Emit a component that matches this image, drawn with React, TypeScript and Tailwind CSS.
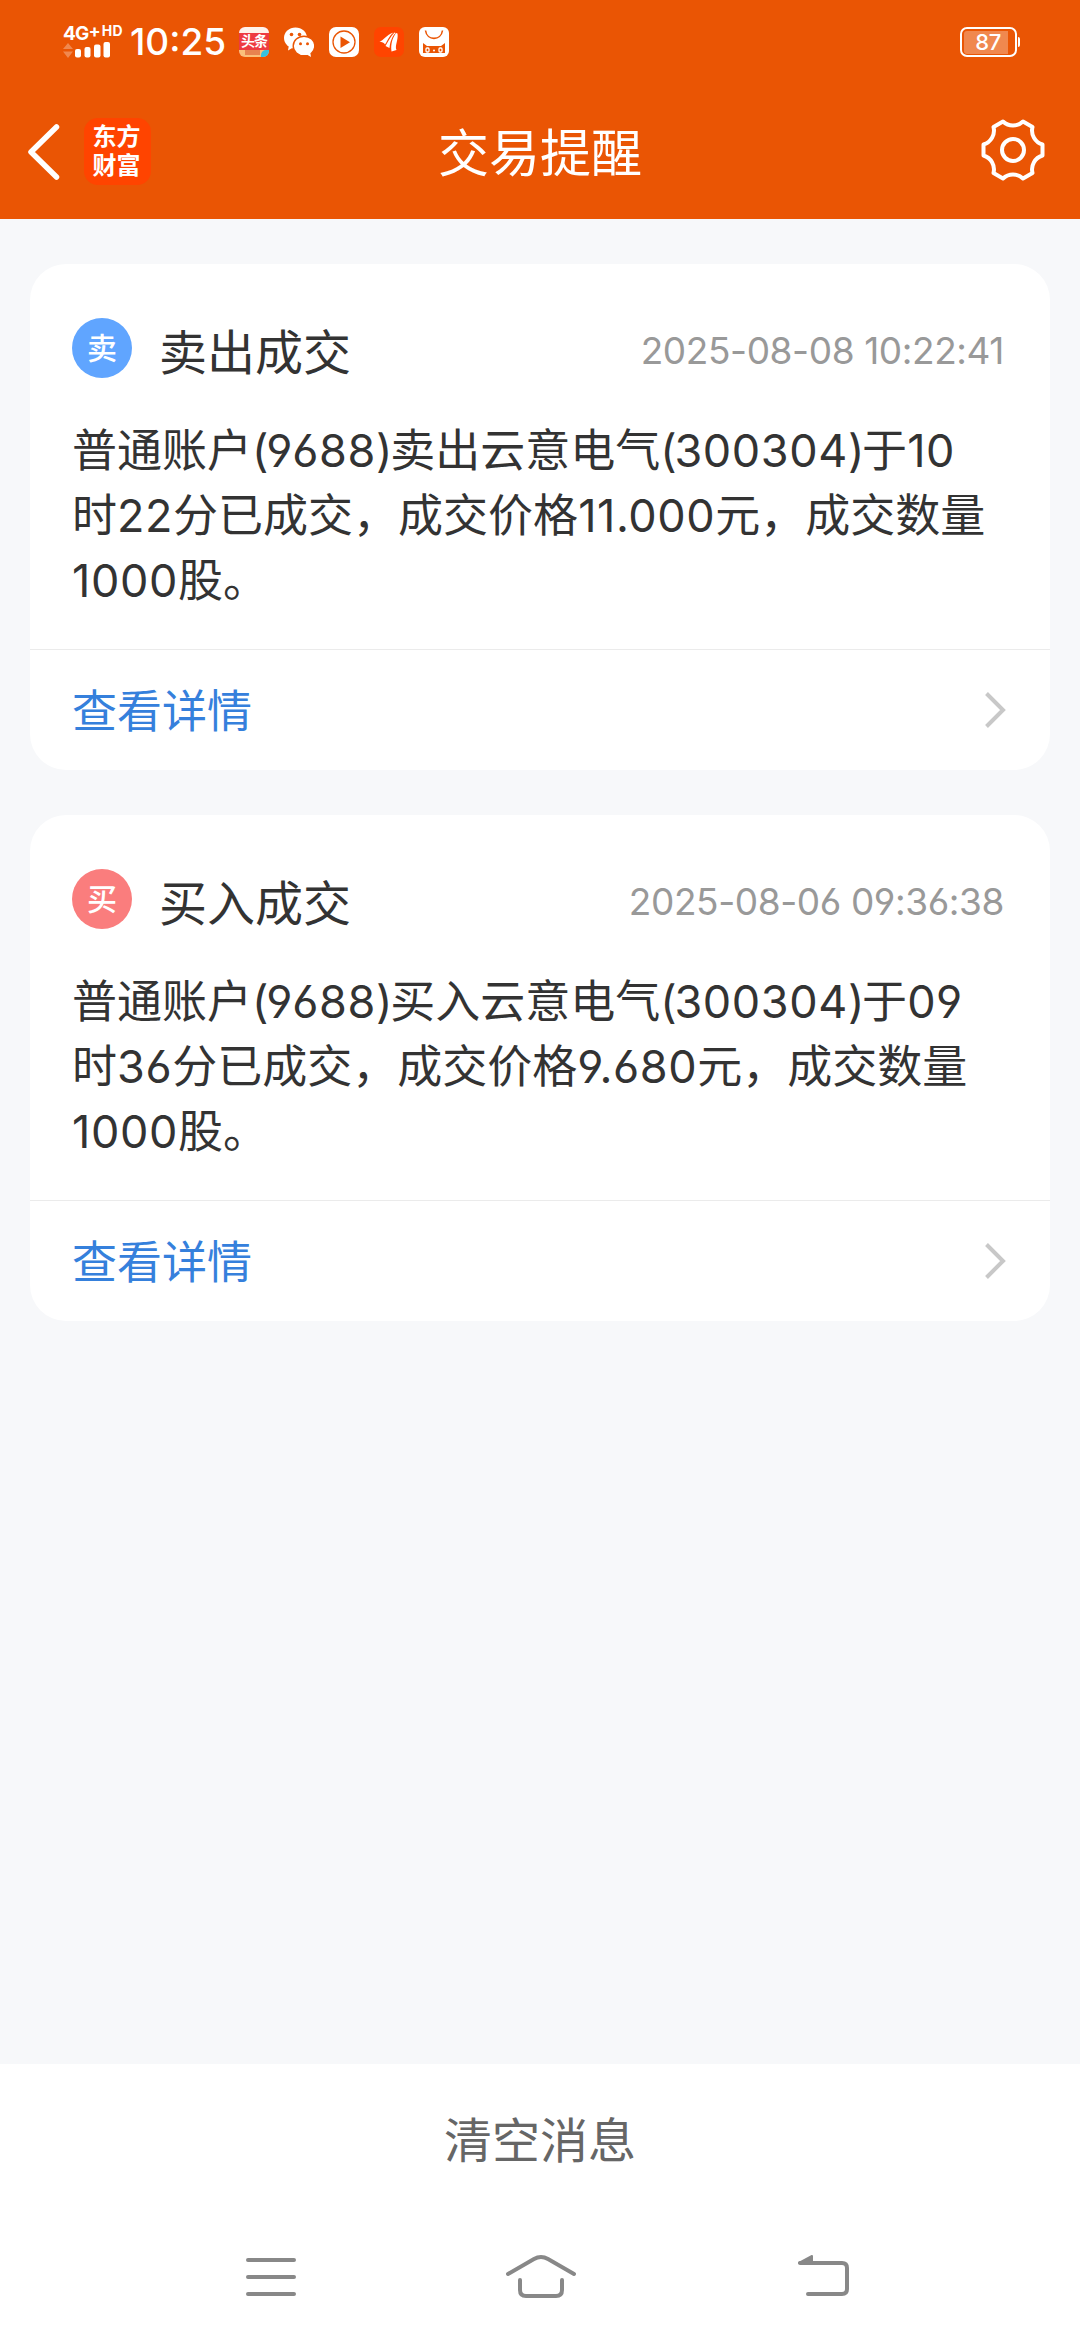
interface TradeMessage {
  id: number;
  badge: string;
  badgeClass: string;
  title: string;
  time: string;
  lines: string[];
}

const messages: TradeMessage[] = [
  {
    id: 1,
    badge: '卖',
    badgeClass: 'bg-[#60a5ff]',
    title: '卖出成交',
    time: '2025-08-08 10:22:41',
    lines: [
      '普通账户(9688)卖出云意电气(300304)于10',
      '时22分已成交，成交价格11.000元，成交数量',
      '1000股。'
    ]
  },
  {
    id: 2,
    badge: '买',
    badgeClass: 'bg-[#fa7d7d]',
    title: '买入成交',
    time: '2025-08-06 09:36:38',
    lines: [
      '普通账户(9688)买入云意电气(300304)于09',
      '时36分已成交，成交价格9.680元，成交数量',
      '1000股。'
    ]
  }
];

function SignalIcon() {
  return (
    <div className="flex h-[35px] w-[60px] flex-col">
      <div className="flex h-[17px] gap-[3px] leading-[17px] font-bold text-white">
        <span className="text-[19px] tracking-[-0.8px]">4G</span>
        <span className="-ml-[3px] text-[18px] leading-[11px]">+</span>
        <span className="-ml-[2px] text-[14px] leading-[12px] tracking-[0.2px]">HD</span>
      </div>
      <svg width="50" height="18" viewBox="0 0 50 18" fill="#fff">
        <path d="M5 1L10 7H0ZM0 9.5H10L5 16Z" opacity="0.3" />
        <rect x="12" y="7" width="6" height="8.5" rx="2" />
        <rect x="21.5" y="5" width="6" height="10.5" rx="2" />
        <rect x="31" y="2.5" width="6.5" height="13" rx="2" />
        <rect x="40.5" y="0" width="6.5" height="15.5" rx="2" />
      </svg>
    </div>
  );
}

function StatusBar() {
  return (
    <div className="flex h-[84px] items-center pr-[60px] pl-[63px]">
      <SignalIcon />
      <span className="ml-[7px] w-[109px] text-[37px] leading-[40px] font-medium text-white">10:25</span>
      <div className="flex gap-[15px]">
        <div className="flex h-[30px] w-[30px] flex-col overflow-hidden rounded-[6px] bg-[#ee3b41]">
          <div className="h-[6px] bg-[#fff3ea]" />
          <div className="h-[17px] text-center text-[14px] leading-[16px] font-bold tracking-[-1px] text-white">头条</div>
          <div className="flex h-[7px] bg-[#fbc07a]">
            <div className="ml-[6px] h-[5px] w-[15px] bg-[#e8834f]" />
            <div className="ml-auto h-[7px] w-[8px] rounded-tl-[5px] bg-[#35c3e0]" />
          </div>
        </div>
        <svg width="30" height="30" viewBox="0 0 30 30" fill="#fff">
          <ellipse cx="11.5" cy="11" rx="11.5" ry="10.5" />
          <path d="M5 18L4 23.5L10 20Z" />
          <ellipse cx="20" cy="19" rx="10.8" ry="9.8" stroke="#ea5504" strokeWidth="1.4" />
          <path d="M22 27L27 30L26 24Z" />
          <g fill="#ea5504">
            <circle cx="7.5" cy="7.5" r="1.8" />
            <circle cx="15.5" cy="7.5" r="1.8" />
            <circle cx="16.5" cy="16.8" r="1.5" />
            <circle cx="23.5" cy="16.8" r="1.5" />
          </g>
        </svg>
        <svg width="30" height="30" viewBox="0 0 30 30">
          <rect width="30" height="30" rx="7" fill="#fff" />
          <circle cx="15" cy="15" r="11" fill="none" stroke="#ea5504" strokeWidth="1.3" />
          <path d="M11.5 9.5L21 15.2L11.5 21Z" fill="#ea5504" />
        </svg>
        <svg width="30" height="30" viewBox="0 0 30 30">
          <rect width="30" height="30" rx="7" fill="#ff4400" />
          <path
            d="M5.5 14.5C10 13.5 12 8 19.5 5.5C14.5 9.5 13.5 14 11 17.5C10 15.5 8 15 5.5 14.5ZM20.5 5.5C16 10 14 15 11.5 19L15.5 21C16 16 17.5 10 21.5 6ZM22 6C18.5 11 16.5 17 17.5 24.5L22.5 23C20.5 19 24.5 13 23.5 6.5Z"
            fill="#fff"
          />
        </svg>
        <svg width="30" height="30" viewBox="0 0 30 30" fill="none">
          <rect width="30" height="30" rx="6" fill="#fff" />
          <path d="M6.5 3.5C8 14 22 14 23.5 3.5" stroke="#ea5504" strokeWidth="1.6" />
          <path d="M4 16L8 19H22L26 16V26H4Z" fill="#ea5504" />
          <rect x="7" y="21" width="3" height="4" rx="1" stroke="#fff" strokeWidth="1.3" />
          <rect x="20" y="21" width="3" height="4" rx="1" stroke="#fff" strokeWidth="1.3" />
          <circle cx="15" cy="23.5" r="1" fill="#fff" />
        </svg>
      </div>
      <div className="ml-auto flex items-center gap-[1px]">
        <div className="flex h-[30px] w-[57px] rounded-[7px] border-[2.5px] border-white p-[1.5px]">
          <div className="h-full w-[44px] rounded-l-[3px] bg-white/30 pl-[5px] text-center text-[22px] leading-[22px] font-medium tracking-[-0.5px] text-white">
            87
          </div>
        </div>
        <div className="h-[10px] w-[2px] rounded-r bg-white" />
      </div>
    </div>
  );
}

function Header() {
  return (
    <div className="flex h-[135px] items-center justify-between">
      <div className="flex w-[430px] items-center pl-[26px]">
        <svg width="34" height="56" viewBox="0 0 34 56" fill="none">
          <path d="M30.5 3L5 28L30.5 53" stroke="#fff" strokeWidth="5.5" strokeLinecap="round" strokeLinejoin="round" />
        </svg>
        <div className="ml-[24px] flex h-[67px] w-[67px] flex-col items-center justify-center rounded-[14px] bg-[#ff4400] pr-[2px] pb-[2px] text-[24px] leading-[29px] font-bold text-white">
          <span>东方</span>
          <span>财富</span>
        </div>
      </div>
      <h1 className="pt-[5px] text-[51px] leading-[60px] font-normal text-white">交易提醒</h1>
      <div className="flex w-[430px] justify-end pr-[33px] pb-[3px]">
        <svg width="68" height="68" viewBox="-34 -34 68 68" fill="none" stroke="#fff" strokeWidth="4" strokeLinejoin="round">
          <path d="M-10 -28.5A14.5 14.5 0 0 0 10 -28.5L19.5 -23A14.5 14.5 0 0 0 29.5 -5.5V5.5A14.5 14.5 0 0 0 19.5 23L10 28.5A14.5 14.5 0 0 0 -10 28.5L-19.5 23A14.5 14.5 0 0 0 -29.5 5.5V-5.5A14.5 14.5 0 0 0 -19.5 -23Z" />
          <circle r="11" />
        </svg>
      </div>
    </div>
  );
}

// digits are spaced a little wider and parentheses a little tighter than the Chinese text
function MessageLine({ text }: { text: string }) {
  return (
    <p className="whitespace-nowrap">
      {text.split(/([\d.]+|[()])/).map((part, i) => (
        <span key={i} className={/[()]/.test(part) ? 'tracking-[-2.2px]' : i % 2 ? 'tracking-[0.6px]' : ''}>
          {part}
        </span>
      ))}
    </p>
  );
}

function MessageCard({ message }: { message: TradeMessage }) {
  return (
    <div className="h-[506px] overflow-hidden rounded-[36px] bg-white">
      <div className="h-[386px] border-b border-[#ebebeb] px-[42px] pt-[54px]">
        <div className="flex h-[60px] items-center pr-[4px]">
          <div className={`flex h-[60px] w-[60px] items-center justify-center rounded-full text-[30px] leading-[60px] font-medium text-white ${message.badgeClass}`}>
            {message.badge}
          </div>
          <h2 className="ml-[27px] pt-[9px] text-[48px] leading-[60px] text-[#333]">{message.title}</h2>
          <span className="ml-auto pt-[5px] text-[37px] leading-[50px] tracking-[-0.4px] text-[#999]">{message.time}</span>
        </div>
        <div className="mt-[40px] text-[45px] leading-[65px] text-[#333]">
          {message.lines.map((line) => (
            <MessageLine key={line} text={line} />
          ))}
        </div>
      </div>
      <div className="flex h-[120px] items-center justify-between pr-[43px] pl-[42px]">
        <span className="pt-[3px] text-[45px] leading-[60px] text-[#3580dc]">查看详情</span>
        <svg width="24" height="40" viewBox="0 0 24 40" fill="none">
          <path d="M3.5 3.5L20 20L3.5 36.5" stroke="#c8c8c8" strokeWidth="4" />
        </svg>
      </div>
    </div>
  );
}

function NavigationBar() {
  return (
    <div className="flex h-[126px] items-start pt-[36px] pl-[240px]">
      <svg width="62" height="54" viewBox="240 2250 62 54" stroke="#888" strokeWidth="4" strokeLinecap="round">
        <path d="M248 2260H294M248 2277H294M248 2294H294" />
      </svg>
      <svg className="ml-[198px]" width="82" height="54" viewBox="500 2250 82 54" fill="none" stroke="#888" strokeWidth="4" strokeLinecap="round">
        <path d="M508 2274L534 2259Q541 2255 548 2259L574 2274" />
        <path d="M520 2280V2290Q520 2296 526 2296H556Q562 2296 562 2290V2280" />
      </svg>
      <svg className="ml-[210px]" width="62" height="54" viewBox="792 2250 62 54" fill="none" stroke="#888" strokeWidth="4" strokeLinecap="round">
        <path d="M800 2263H842Q847 2263 847 2268V2289Q847 2294 842 2294H808" />
        <path d="M799 2263L812 2256V2263Z" fill="#888" strokeWidth="2" strokeLinejoin="round" />
      </svg>
    </div>
  );
}

export default function App() {
  return (
    <div className="flex h-[2340px] w-[1080px] flex-col bg-[#f7f8fa] font-['Inter','Noto_Sans_CJK_SC',sans-serif] [font-feature-settings:'cv03','cv04']">
      <header className="h-[219px] bg-[#ea5504]">
        <StatusBar />
        <Header />
      </header>
      <main className="flex flex-1 flex-col gap-[45px] px-[30px] pt-[45px]">
        {messages.map((message) => (
          <MessageCard key={message.id} message={message} />
        ))}
      </main>
      <footer className="h-[276px] bg-white">
        <button type="button" className="flex h-[150px] w-full items-center justify-center pt-[4px] text-[48px] leading-[60px] text-[#666]">
          清空消息
        </button>
        <NavigationBar />
      </footer>
    </div>
  );
}
